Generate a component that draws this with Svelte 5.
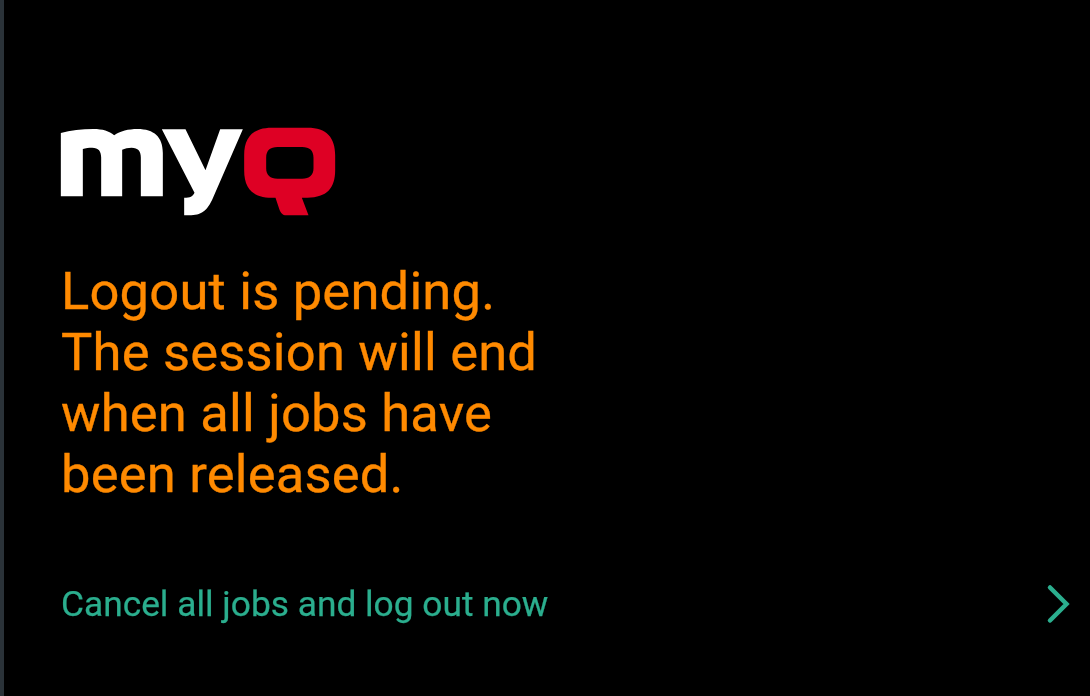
<script>
  const lines = ['Logout is pending.', 'The session will end', 'when all jobs have', 'been released.'];
</script>

<div class="screen">
  <svg class="logo" viewBox="60 50 830 270" width="277" height="90" role="img" aria-label="MyQ">
    <path class="white" d="M62 68 C90 60 125 56 160 56 C187 56 207 62 222 75 C240 62 265 56 292 56 C342 56 368 80 368 128 L368 258 L302 258 L302 142 C302 122 294 112 274 112 C264 112 254 114 246 118 L246 258 L183 258 L183 142 C183 122 175 112 156 112 C146 112 136 113 128 116 L128 258 L62 258 Z"/>
    <path class="white" d="M365 57 L436 57 L496 180 L540 57 L608 57 L516 268 C496 310 476 316 432 315 L432 262 C450 262 458 258 463 247 Z"/>
    <path class="red" fill-rule="evenodd" d="M695 52 L802 52 C860 52 885 82 885 135 L885 180 C885 234 860 262 802 262 L785 262 L805 315 L738 315 C728 315 722 308 718 298 L706 262 L695 262 C637 262 612 234 612 180 L612 135 C612 82 637 52 695 52 Z M712 110 C690 110 678 120 678 142 L678 174 C678 195 690 205 712 205 L786 205 C808 205 820 195 820 174 L820 142 C820 120 808 110 786 110 Z"/>
  </svg>

  <h1 class="message">
    {#each lines as line}
      <span>{line}</span>
    {/each}
  </h1>

  <div class="action">
    <span>Cancel all jobs and log out now</span>
    <svg viewBox="0 0 24 40" width="24" height="40" aria-hidden="true">
      <path d="M4 3.5 L20.5 20 L4 36.5" />
    </svg>
  </div>
</div>

<style>
  :global(body) {
    margin: 0;
    background: #000;
  }
  .screen {
    box-sizing: border-box;
    width: 1090px;
    height: 696px;
    background: #000;
    border-left: 4px solid #2a3238;
    padding: 127px 20px 0 56px;
    display: flex;
    flex-direction: column;
    font-family: Roboto, sans-serif;
    overflow: hidden;
  }
  .logo {
    display: block;
    flex: none;
    filter: blur(0.4px);
  }
  .white { fill: #fff; }
  .red { fill: #de0024; }
  .message {
    margin: 44px 0 0 1px;
    font-size: 52.5px;
    line-height: 61px;
    font-weight: 400;
    letter-spacing: 0.2px;
    color: #ff8a00;
    -webkit-text-stroke: 0.35px #ff8a00;
    filter: blur(0.4px);
  }
  .message span { display: block; }
  .action {
    margin: 79px 0 0 1px;
    display: flex;
    align-items: center;
    justify-content: space-between;
    color: #2bae8e;
    font-size: 35.3px;
    line-height: 40px;
    -webkit-text-stroke: 0.25px #2bae8e;
    filter: blur(0.4px);
  }
  .action path {
    fill: none;
    stroke: #2bae8e;
    stroke-width: 4.5;
    stroke-linecap: round;
    stroke-linejoin: miter;
  }
</style>
